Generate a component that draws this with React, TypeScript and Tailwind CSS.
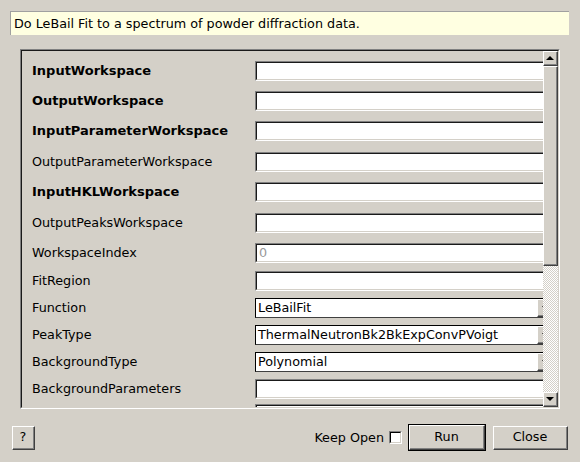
import React from 'react';

type Row = {
  label: string;
  bold?: boolean;
  kind: 'text' | 'combo';
  value?: string;
  muted?: boolean;
  gap: string;
};

const rows: Row[] = [
  { label: 'InputWorkspace', bold: true, kind: 'text', gap: 'mt-[10px]' },
  { label: 'OutputWorkspace', bold: true, kind: 'text', gap: 'mt-[10px]' },
  { label: 'InputParameterWorkspace', bold: true, kind: 'text', gap: 'mt-[10px]' },
  { label: 'OutputParameterWorkspace', kind: 'text', gap: 'mt-[11px]' },
  { label: 'InputHKLWorkspace', bold: true, kind: 'text', gap: 'mt-[10px]' },
  { label: 'OutputPeaksWorkspace', kind: 'text', gap: 'mt-[11px]' },
  { label: 'WorkspaceIndex', kind: 'text', value: '0', muted: true, gap: 'mt-[10px]' },
  { label: 'FitRegion', kind: 'text', gap: 'mt-[8px]' },
  { label: 'Function', kind: 'combo', value: 'LeBailFit', gap: 'mt-[7px]' },
  { label: 'PeakType', kind: 'combo', value: 'ThermalNeutronBk2BkExpConvPVoigt', gap: 'mt-[7px]' },
  { label: 'BackgroundType', kind: 'combo', value: 'Polynomial', gap: 'mt-[7px]' },
  { label: 'BackgroundParameters', kind: 'text', gap: 'mt-[7px]' },
  // next row is scrolled out of view, only its field's top edge shows
  { label: '', kind: 'text', gap: 'mt-[5px]' },
];

function Raised({ className, children }: { className: string; children?: React.ReactNode }) {
  return (
    <div
      className={`border border-t-white border-l-white border-b-[#404040] border-r-[#404040] ${className}`}
    >
      <div className="h-full w-full border-r border-b border-[#808080] flex items-center justify-center">
        {children}
      </div>
    </div>
  );
}

function TextField({ value, muted }: { value?: string; muted?: boolean }) {
  return (
    <div className="w-[300px] h-[20px] shrink-0 border border-t-[#808080] border-l-[#808080] border-b-white border-r-white">
      <div className="h-full border border-t-[#1a1a1a] border-l-[#1a1a1a] border-b-[#d4d0c8] border-r-[#d4d0c8] bg-white flex items-center px-[2px]">
        <span className={muted ? 'text-[#9a9a9a]' : ''}>{value}</span>
      </div>
    </div>
  );
}

function Combo({ value }: { value?: string }) {
  return (
    <div className="w-[300px] h-[20px] shrink-0 border border-t-black border-l-black border-b-[#404040] border-r-[#404040] bg-white flex items-center">
      <span className="flex-1 pl-[2px]">{value}</span>
      <Raised className="w-[16px] h-[18px] bg-[#d4d0c8] mr-[1px]">
        <div className="w-0 h-0 border-l-[3px] border-r-[3px] border-t-[4px] border-l-transparent border-r-transparent border-t-black" />
      </Raised>
    </div>
  );
}

export default function App() {
  return (
    <div className="w-[580px] h-[462px] bg-[#d4d0c8] flex flex-col font-['DejaVu_Sans',sans-serif] text-[12.75px] text-black overflow-hidden">
      <div className="ml-[10px] mt-[11px] w-[559px] h-[24px] bg-[#ffffe1] border-t border-l border-[#a0a0a0] flex items-center px-[3px]">
        Do LeBail Fit to a spectrum of powder diffraction data.
      </div>

      <div className="ml-[20px] mt-[14px] w-[540px] h-[360px] border border-t-[#808080] border-l-[#808080] border-b-white border-r-white">
        <div className="h-full border border-t-[#1a1a1a] border-l-[#1a1a1a] border-b-[#d4d0c8] border-r-[#d4d0c8] flex">
          <div className="flex-1 overflow-hidden flex flex-col">
            {rows.map((r, i) => (
              <div key={i} className={`flex items-center h-[20px] shrink-0 ${r.gap}`}>
                <div className={`w-[233px] shrink-0 pl-[10px] ${r.bold ? 'font-bold text-[13px]' : ''}`}>
                  {r.label}
                </div>
                {r.kind === 'text' ? (
                  <TextField value={r.value} muted={r.muted} />
                ) : (
                  <Combo value={r.value} />
                )}
              </div>
            ))}
          </div>

          <div className="w-[15px] flex flex-col">
            <Raised className="h-[15px] bg-[#d4d0c8]">
              <div className="w-0 h-0 border-l-[4px] border-r-[4px] border-b-[4px] border-l-transparent border-r-transparent border-b-black" />
            </Raised>
            <Raised className="h-[200px] bg-[#d4d0c8]" />
            <div className="flex-1 bg-[repeating-conic-gradient(#d4d0c8_0%_25%,#ffffff_0%_50%)] bg-[length:2px_2px]" />
            <Raised className="h-[15px] bg-[#d4d0c8]">
              <div className="w-0 h-0 border-l-[4px] border-r-[4px] border-t-[4px] border-l-transparent border-r-transparent border-t-black" />
            </Raised>
          </div>
        </div>
      </div>

      <div className="mt-[15px] mx-[12px] flex items-center h-[27px]">
        <Raised className="w-[23px] h-[24px]">
          <span>?</span>
        </Raised>
        <div className="flex-1" />
        <span>Keep Open</span>
        <div className="ml-[5px] w-[13px] h-[13px] border border-t-[#808080] border-l-[#808080] border-b-white border-r-white">
          <div className="h-full border border-t-black border-l-black border-b-[#d4d0c8] border-r-[#d4d0c8] bg-white" />
        </div>
        <div className="ml-[6px] w-[78px] h-[27px] border border-black">
          <Raised className="w-full h-full">
            <span>Run</span>
          </Raised>
        </div>
        <Raised className="ml-[7px] w-[75px] h-[24px]">
          <span>Close</span>
        </Raised>
      </div>
    </div>
  );
}
